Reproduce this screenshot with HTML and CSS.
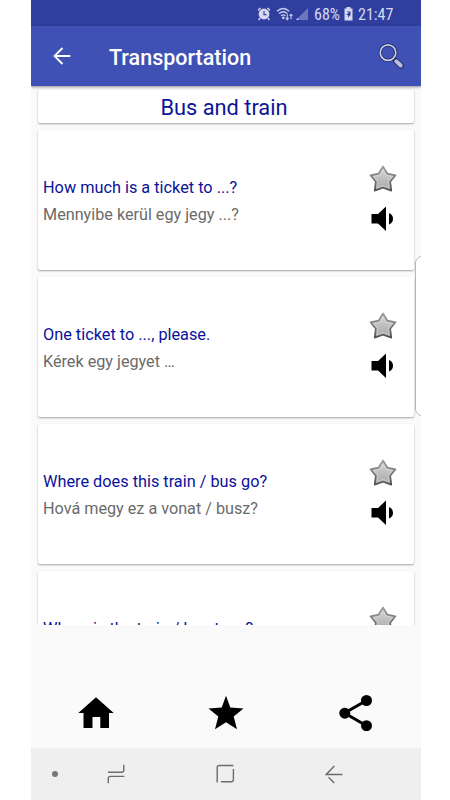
FILE: index.html
```html
<!DOCTYPE html>
<html lang="en">
<head>
<meta charset="utf-8">
<title>Transportation</title>
<link rel="stylesheet" href="styles.css">
</head>
<body>
<svg class="defs" width="0" height="0" aria-hidden="true">
  <defs>
    <linearGradient id="silver" x1="0" y1="0" x2="0" y2="1">
      <stop offset="0" stop-color="#d8d8d8"/><stop offset="1" stop-color="#a6a6a6"/>
    </linearGradient>
    <linearGradient id="rim" x1="0" y1="0" x2="0" y2="1">
      <stop offset="0" stop-color="#a0a0a0"/><stop offset="1" stop-color="#505050"/>
    </linearGradient>
    <symbol id="fav" viewBox="0 0 28 28">
      <path d="M14 1.5 18.4 8.7 26.5 10.3 21.2 16.8 22.3 25.6 14 22.8 5.7 25.6 6.8 16.8 1.5 10.3 9.6 8.7Z" fill="url(#silver)" stroke="url(#rim)" stroke-width="1.7" stroke-linejoin="round"/>
      <path d="M14 5 17.2 10.4 23.2 11.6 19.2 16.4 20 22.5 14 20.4 8 22.5 8.8 16.4 4.8 11.6 10.8 10.4Z" fill="none" stroke="#eee" stroke-opacity=".4" stroke-width=".9" stroke-linejoin="round"/>
    </symbol>
    <symbol id="speaker" viewBox="0 0 24 26">
      <path d="M.5 8H7L15 .5V25L7 17.5H.5ZM18 7Q22 8.5 22 12.8T18 18.5Z"/>
    </symbol>
  </defs>
</svg>
<div class="phone">
  <header class="status">
    <svg class="alarm" width="14" height="14" viewBox="0 0 14 14"><circle cx="7" cy="7" r="5.4" fill="#d5d8ee"/><path d="M1 3.2 3.5 1M13 3.2 10.5 1M3 11 1.7 13M11 11 12.3 13" stroke="#d5d8ee" stroke-width="1.5"/><path d="M7 4V7.6H9.4" fill="none" stroke="#303f9f" stroke-width="1.1"/></svg>
    <svg class="wifi" width="18" height="14" viewBox="0 0 18 14" fill="none" stroke="#c8cce8" stroke-width="1.3"><path d="M1 4.2Q7 -1.2 13.3 4.2M3 6.5Q7.2 3 11.5 6.5M5 8.8Q7.3 7 9.5 8.8"/><circle cx="7.3" cy="10.8" r=".7" fill="#c8cce8"/><path d="M11.3 7.2V12.6M9.8 11 11.3 12.6 12.7 11M15 12.2V7.2M13.5 8.8 15 7.2 16.5 8.8" stroke-width="1.1"/></svg>
    <svg class="signal" width="14" height="14" viewBox="0 0 14 14"><path d="M13 1V13H1Z" fill="#6c76bc"/><path d="M3.2 10.8V13H1Z" fill="#d5d8ee"/></svg>
    <span class="percent">68%</span>
    <svg class="battery" width="9" height="14" viewBox="0 0 9 14"><path d="M2.5 0H6.5V1.5H8.5V13.5H.5V1.5H2.5Z" fill="#d5d8ee"/><path d="M2.5 4.5H6.5V8L4 10.5V8H2.2L4.8 5.4" fill="#303f9f"/></svg>
    <span class="clock">21:47</span>
  </header>
  <div class="toolbar">
    <svg class="back" width="18" height="18" viewBox="0 0 18 18" fill="none" stroke="#fff" stroke-width="1.8"><path d="M17.3 9H1.8M9.5 1 1.5 9 9.5 17"/></svg>
    <h1>Transportation</h1>
    <svg class="search" width="26" height="26" viewBox="0 0 26 26" fill="none"><path d="M15 15 18 18" stroke="#202858" stroke-width="3"/><path d="M18.2 18.2 22.8 22.6" stroke="#1c2350" stroke-width="5.6" stroke-linecap="round"/><path d="M18.3 18.3 22.7 22.5" stroke="#b9bfe4" stroke-width="4" stroke-linecap="round"/><circle cx="10" cy="9.6" r="7.8" stroke="#202858" stroke-width="3.2"/><circle cx="10" cy="9.6" r="7.8" stroke="#c9cdec" stroke-width="1.7"/></svg>
  </div>
  <main class="list">
    <h2 class="card heading">Bus and train</h2>
    <article class="card phrase">
      <div class="text"><p class="source">How much is a ticket to ...?</p><p class="target">Mennyibe kerül egy jegy ...?</p></div>
      <div class="actions"><svg class="fav"><use href="#fav"/></svg><svg class="speaker"><use href="#speaker"/></svg></div>
    </article>
    <article class="card phrase">
      <div class="text"><p class="source">One ticket to ..., please.</p><p class="target">Kérek egy jegyet …</p></div>
      <div class="actions"><svg class="fav"><use href="#fav"/></svg><svg class="speaker"><use href="#speaker"/></svg></div>
    </article>
    <article class="card phrase">
      <div class="text"><p class="source">Where does this train / bus go?</p><p class="target">Hová megy ez a vonat / busz?</p></div>
      <div class="actions"><svg class="fav"><use href="#fav"/></svg><svg class="speaker"><use href="#speaker"/></svg></div>
    </article>
    <article class="card phrase">
      <div class="text"><p class="source">Where is the train / bus to ...?</p></div>
      <div class="actions"><svg class="fav"><use href="#fav"/></svg></div>
    </article>
  </main>
  <nav class="tabs">
    <svg width="36" height="36" viewBox="0 0 36 36"><path d="M18 2.3 35.7 18H31V33H22.3V22H14.5V33H5.5V18H.3Z"/></svg>
    <svg width="36" height="36" viewBox="0 0 36 36"><path d="M18 .8 22.3 12.4 35.5 13.5 25.7 21.5 29 34.2 18 27.2 7 34.2 10.3 21.5 .5 13.5 13.7 12.4Z"/></svg>
    <svg width="36" height="36" viewBox="0 0 36 36"><path d="M28.5 5.5 6.5 18 28.5 30.8" fill="none" stroke="#000" stroke-width="3"/><circle cx="28.5" cy="5.5" r="5.5"/><circle cx="6.8" cy="18.2" r="5.5"/><circle cx="28.5" cy="30.7" r="5.5"/></svg>
  </nav>
  <footer class="system">
    <i class="dot"></i>
    <svg width="20" height="20" viewBox="0 0 20 20"><path d="M1 8.3H14.5Q16.8 8.3 16.8 6V.8M1.3 19.2V14.5Q1.3 12.4 3.5 12.4H17.3"/></svg>
    <svg width="20" height="20" viewBox="0 0 20 20"><path d="M1.2 18.5V3.5Q1.2 1.5 3.2 1.5H17.4M17.4 5V15.5Q17.4 17.8 15.2 17.8H4.9"/></svg>
    <svg width="20" height="20" viewBox="0 0 20 20"><path d="M17.5 10.5H1.3L9.3 2M3.5 13.2 9.3 19"/></svg>
  </footer>
  <div class="edge"></div>
</div>
</body>
</html>
```

FILE: styles.css
```css
* { box-sizing: border-box; }
body { margin: 0; background: #fff; font-family: Roboto, sans-serif; }
h1, h2, p { margin: 0; font-weight: 400; }
svg { display: block; flex: none; }
.defs { position: absolute; }
.phone { position: relative; width: 390px; height: 800px; margin-left: 31px; background: #fafafa; display: flex; flex-direction: column; overflow: hidden; }
.status { height: 26px; flex: none; background: #303f9f; color: #d5d8ee; display: flex; align-items: center; justify-content: flex-end; padding: 2px 28px 0 0; font-family: "Roboto Condensed", Roboto, sans-serif; font-size: 16px; }
.wifi { margin-left: 5px; }
.signal { margin-left: 1px; }
.percent, .clock { display: block; white-space: nowrap; }
.percent { width: 26px; margin-left: 5px; }
.battery { margin: 0 5px 0 4px; }
.clock { width: 35px; }
.toolbar { position: relative; z-index: 1; height: 60px; flex: none; display: flex; align-items: center; background: #3f51b5; color: #fff; padding: 0 17px 0 22px; box-shadow: 0 1px 3px rgba(0,0,0,.45); }
.toolbar h1 { flex: 1; margin-left: 38px; padding-top: 3px; font-size: 21.5px; font-weight: 500; }
.list { height: 539px; flex: none; overflow: hidden; padding: 4px 7px 0; }
.card { background: #fff; border-radius: 2px; box-shadow: 0 1px 2px rgba(0,0,0,.35); }
.heading { height: 33px; margin-bottom: 7px; color: #0d1599; font-size: 21.8px; line-height: 35px; text-align: center; padding-right: 4px; }
.phrase { height: 140px; margin-bottom: 7px; padding: 35px 17px 0 5px; display: flex; justify-content: space-between; }
.text { padding-top: 12px; font-size: 16.3px; line-height: 22px; white-space: nowrap; }
.source { color: #0a129a; }
.target { color: #6b6b6b; margin-top: 5px; font-size: 16.2px; }
.actions { width: 28px; display: flex; flex-direction: column; }
.fav { width: 28px; height: 28px; }
.speaker { width: 24px; height: 26px; margin: 13px 0 0 2px; }
.tabs { height: 123px; flex: none; display: flex; align-items: flex-end; justify-content: space-between; padding: 0 47px 17px; }
.system { height: 52px; flex: none; background: #efefef; display: flex; align-items: center; padding-left: 21px; gap: 89px; }
.system svg { fill: none; stroke: #6c6c6c; stroke-width: 1.4; }
.dot { width: 6px; height: 6px; border-radius: 50%; background: #777; margin-right: -40px; }
.edge { position: absolute; z-index: 2; left: 384px; top: 256px; width: 14px; height: 160px; border: 1px solid #b5b5b5; border-radius: 8px; background: #fff; }
```
